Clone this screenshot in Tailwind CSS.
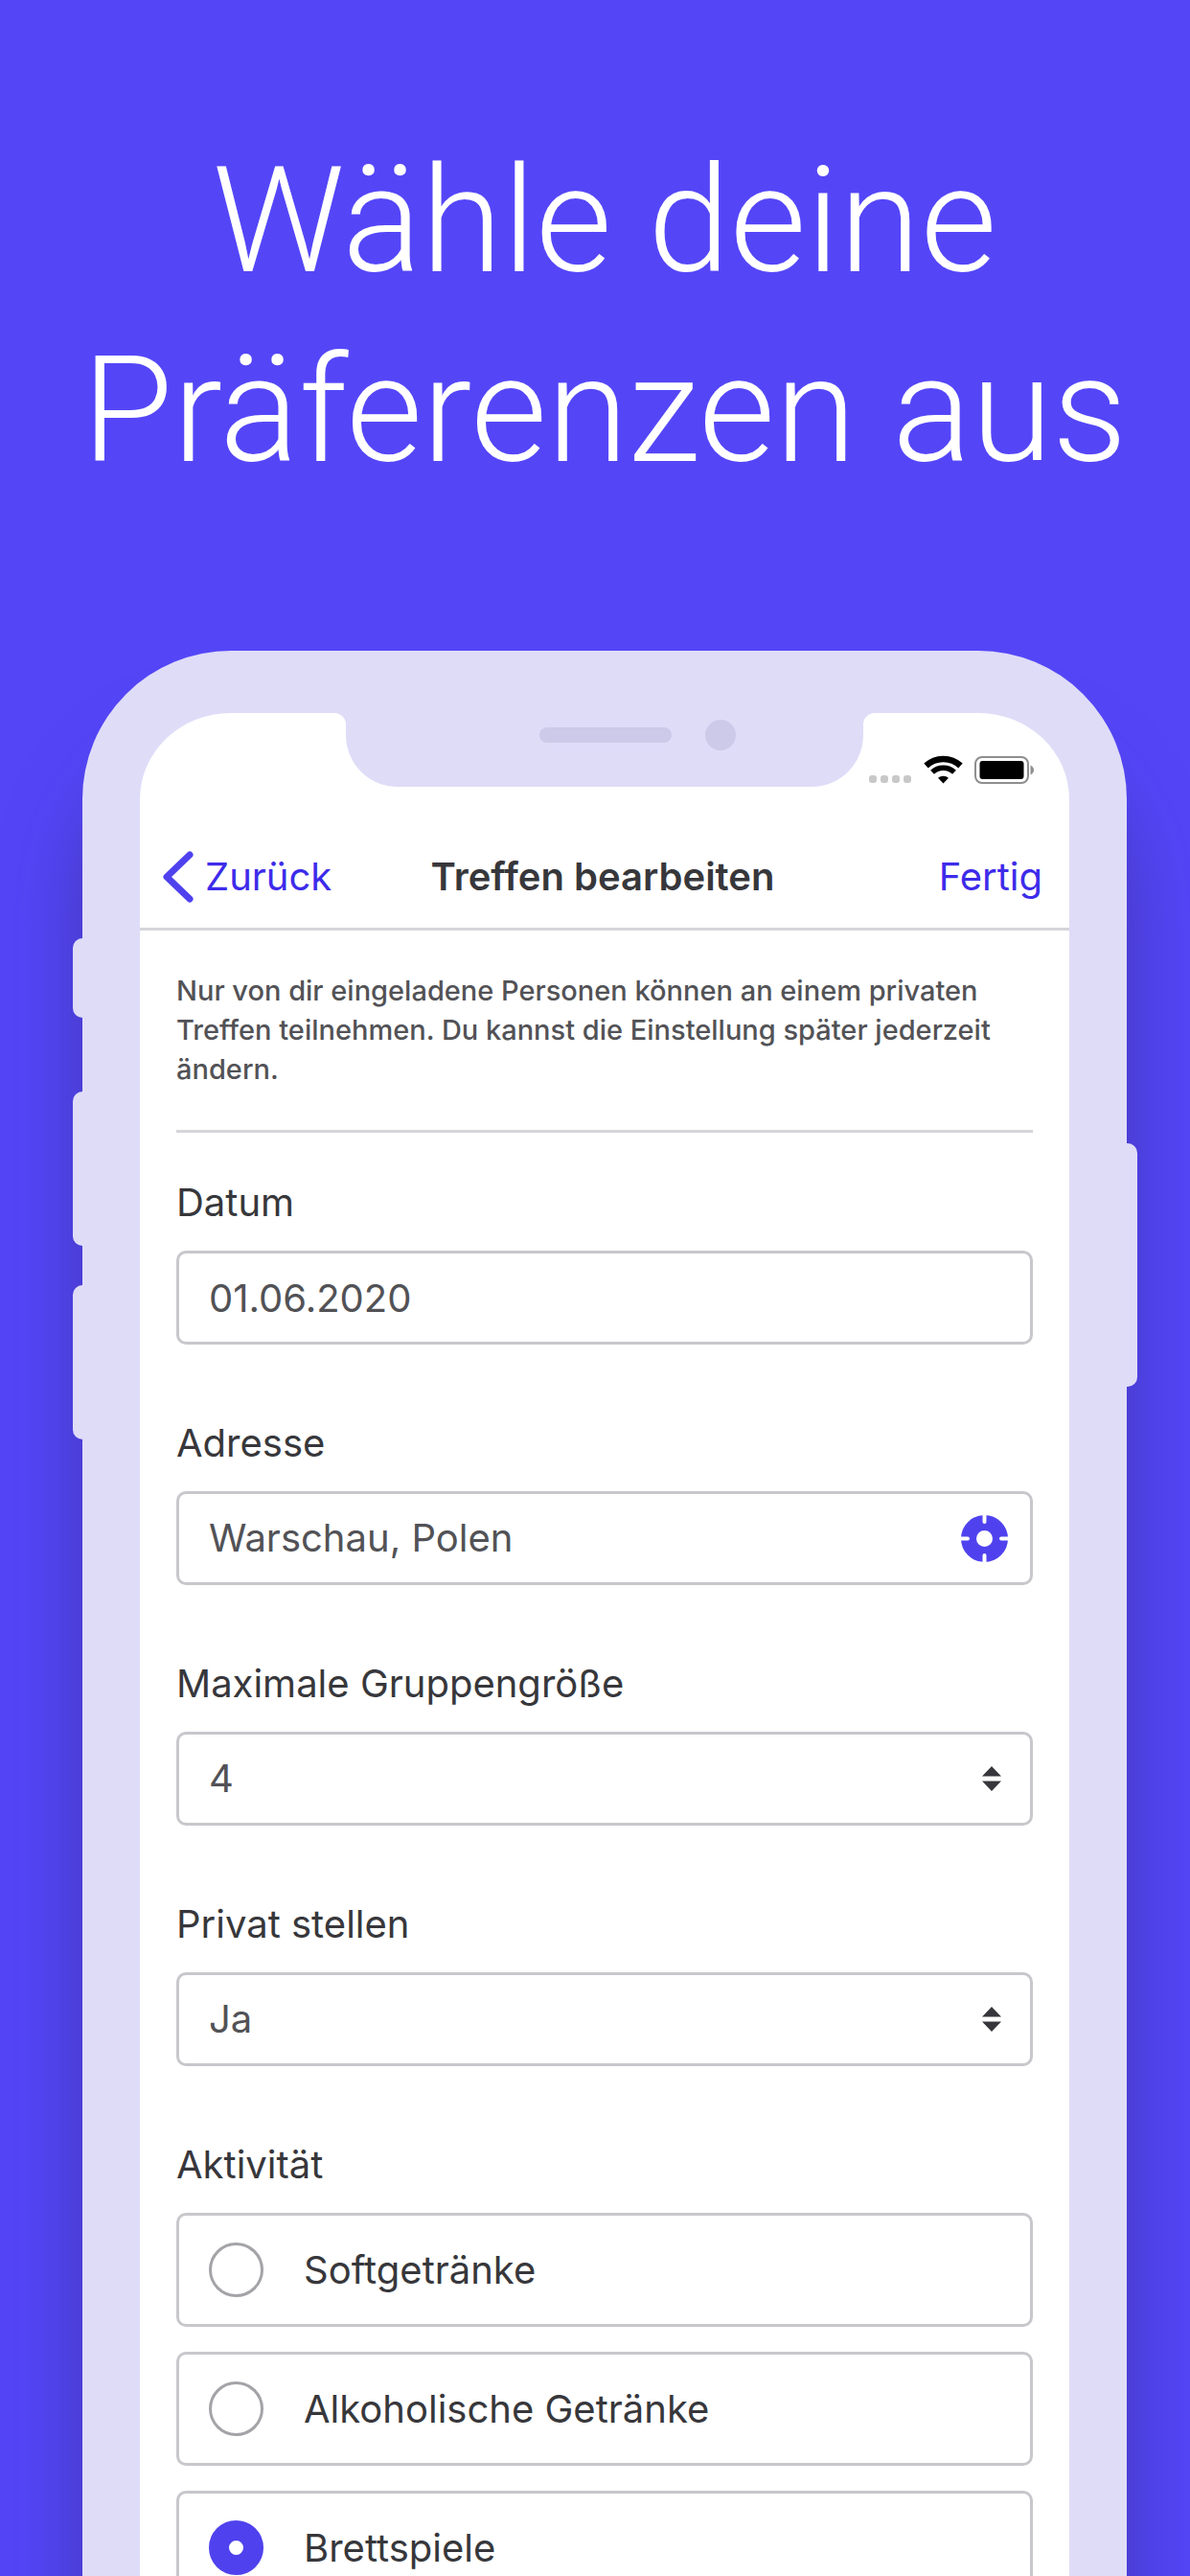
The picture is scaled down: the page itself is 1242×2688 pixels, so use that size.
<!DOCTYPE html>
<html lang="de">
<head>
<meta charset="utf-8">
<meta name="viewport" content="width=device-width, initial-scale=1">
<title>Treffen bearbeiten</title>
<script src="https://cdn.jsdelivr.net/npm/@tailwindcss/browser@4"></script>
</head>
<body class="bg-[#5446f7] font-[Inter,sans-serif]">
<main class="flex h-screen flex-col overflow-hidden">
  <h1 class="shrink-0 pt-[132px] pl-[20px] text-center font-[Roboto,sans-serif] text-[154px] leading-[198px] font-light text-white">Wähle deine<br>Präferenzen aus</h1>

  <div class="relative mt-[151px] mr-[66px] ml-[86px] shrink-0 rounded-t-[155px] border-x-[60px] border-t-[65px] border-[#dfdcf8] bg-white shadow-[0_100px_80px_0_rgba(50,40,120,0.5)]">
    <!-- side buttons of the device -->
    <div class="absolute top-[235px] left-[-70px] h-[83px] w-[10px] rounded-l-[10px] bg-[#dfdcf8]"></div>
    <div class="absolute top-[395px] left-[-70px] h-[161px] w-[10px] rounded-l-[10px] bg-[#dfdcf8]"></div>
    <div class="absolute top-[597px] left-[-70px] h-[161px] w-[10px] rounded-l-[10px] bg-[#dfdcf8]"></div>
    <div class="absolute top-[449px] right-[-71px] h-[254px] w-[11px] rounded-r-[10px] bg-[#dfdcf8]"></div>

    <!-- notch with speaker and camera -->
    <svg class="absolute top-[-1px] left-1/2 w-[564px] -translate-x-1/2" viewBox="0 -1 564 78" aria-hidden="true">
      <path fill="#dfdcf8" d="M0 -1H564V0a12 12 0 0 0-12 12V23a54 54 0 0 1-54 54H66a54 54 0 0 1-54-54V12A12 12 0 0 0 0 0Z"/>
      <rect x="214" y="15" width="138" height="16" rx="8" fill="#cdc9e8"/>
      <circle cx="403" cy="23" r="16" fill="#cdc9e8"/>
    </svg>

    <div class="flex h-[118px] items-start justify-end pt-[44px] pr-[37px]">
      <svg class="h-[32px] w-[176px]" viewBox="0 0 176 32" aria-label="WLAN, Akku voll" role="img">
        <g fill="#c8c8c8"><rect x="4" y="21" width="8" height="8" rx="3"/><rect x="16" y="21" width="8" height="8" rx="3"/><rect x="28" y="21" width="8" height="8" rx="3"/><rect x="40" y="21" width="8" height="8" rx="3"/></g>
        <path d="M63.500 11a26.500 26.500 0 0 1 36 0" fill="none" stroke="#000" stroke-width="6.500"/>
        <path d="M70 17.800a16.500 16.500 0 0 1 23 0" fill="none" stroke="#000" stroke-width="5.500"/>
        <path d="M81.500 29.500l-5.500-5.800a8.500 8.500 0 0 1 11 0z"/>
        <rect x="115" y="2" width="55" height="27" rx="7" fill="none" stroke="#8e8e8e" stroke-width="2"/>
        <rect x="119.500" y="6" width="46" height="19" rx="3"/>
        <path d="M172.500 10.500q3.500 2 3.500 5t-3.500 5z" fill="#8e8e8e"/>
      </svg>
    </div>

    <nav class="grid h-[109px] grid-cols-[1fr_auto_1fr] items-center border-b-[3px] border-[#d5d5da] pr-[28px] pl-[24px]">
      <a href="#" class="flex items-center gap-[12px] text-[40px] leading-[52px] text-[#3d2bea]">
        <svg class="h-[54px] w-[32px]" viewBox="0 0 32 54" aria-hidden="true"><path d="M28 4 4 27 28 50" fill="none" stroke="#4f42ee" stroke-width="7" stroke-linecap="round" stroke-linejoin="round"/></svg>
        Zurück
      </a>
      <h2 class="text-[40px] leading-[52px] font-semibold text-[#37373b]">Treffen bearbeiten</h2>
      <button type="button" class="justify-self-end text-[40px] leading-[52px] text-[#3d2bea]">Fertig</button>
    </nav>

    <form class="px-[38px] pt-[42px] pb-[50px] text-[40px] leading-[52px] text-[#37373b]">
      <p class="mb-[47px] border-b-[3px] border-[#d5d5da] pb-[43px] text-[29px] leading-[41px] font-medium text-[#525256]">Nur von dir eingeladene Personen können an einem privaten Treffen teilnehmen. Du kannst die Einstellung später jederzeit ändern.</p>

      <div class="flex flex-col gap-[77px]">
      <div class="flex flex-col gap-[24px]">
        <label for="datum">Datum</label>
        <input id="datum" type="text" value="01.06.2020" class="h-[98px] rounded-[10px] border-[3px] border-[#c7c7cc] px-[31px] text-[#525256]">
      </div>

      <div class="flex flex-col gap-[24px]">
        <label for="adresse">Adresse</label>
        <div class="flex h-[98px] items-center rounded-[10px] border-[3px] border-[#c7c7cc] pr-[23px] pl-[31px]">
          <input id="adresse" type="text" value="Warschau, Polen" class="min-w-0 flex-1 text-[#525256]">
          <button type="button" aria-label="Standort verwenden">
            <svg class="size-[49px]" viewBox="0 0 49 49" aria-hidden="true">
              <circle cx="24.500" cy="24.500" r="16.500" fill="none" stroke="#4f42ee" stroke-width="16"/>
              <path d="M24.500-2V7M24.500 42v9M-2 24.500H7M42 24.500h9" stroke="#fff" stroke-width="4" stroke-linecap="round"/>
            </svg>
          </button>
        </div>
      </div>

      <div class="flex flex-col gap-[24px]">
        <label for="groesse">Maximale Gruppengröße</label>
        <div class="relative">
          <select id="groesse" class="block h-[98px] w-full appearance-none rounded-[10px] border-[3px] border-[#c7c7cc] px-[31px] text-[#525256]"><option>4</option></select>
          <svg class="pointer-events-none absolute top-[36px] right-[33px] h-[26px] w-[20px]" viewBox="0 0 20 26" fill="#37373b" aria-hidden="true"><path d="M10 0 20 10.500H0zM10 26 0 15.500H20z"/></svg>
        </div>
      </div>

      <div class="flex flex-col gap-[24px]">
        <label for="privat">Privat stellen</label>
        <div class="relative">
          <select id="privat" class="block h-[98px] w-full appearance-none rounded-[10px] border-[3px] border-[#c7c7cc] px-[31px] text-[#525256]"><option>Ja</option></select>
          <svg class="pointer-events-none absolute top-[36px] right-[33px] h-[26px] w-[20px]" viewBox="0 0 20 26" fill="#37373b" aria-hidden="true"><path d="M10 0 20 10.500H0zM10 26 0 15.500H20z"/></svg>
        </div>
      </div>

      <fieldset>
        <legend class="mb-[24px]">Aktivität</legend>
        <div class="flex flex-col gap-[26px]">
          <label class="flex h-[119px] items-center gap-[42px] rounded-[10px] border-[3px] border-[#c7c7cc] px-[31px]">
            <input type="radio" name="aktivitaet" class="size-[57px] appearance-none rounded-full border-[3px] border-[#a3a3a8] checked:border-[21px] checked:border-[#4f42ee]">Softgetränke</label>
          <label class="flex h-[119px] items-center gap-[42px] rounded-[10px] border-[3px] border-[#c7c7cc] px-[31px]">
            <input type="radio" name="aktivitaet" class="size-[57px] appearance-none rounded-full border-[3px] border-[#a3a3a8] checked:border-[21px] checked:border-[#4f42ee]">Alkoholische Getränke</label>
          <label class="flex h-[119px] items-center gap-[42px] rounded-[10px] border-[3px] border-[#c7c7cc] px-[31px]">
            <input type="radio" name="aktivitaet" checked class="size-[57px] appearance-none rounded-full border-[3px] border-[#a3a3a8] checked:border-[21px] checked:border-[#4f42ee]">Brettspiele</label>
        </div>
      </fieldset>
      </div>
    </form>
  </div>
</main>
</body>
</html>
